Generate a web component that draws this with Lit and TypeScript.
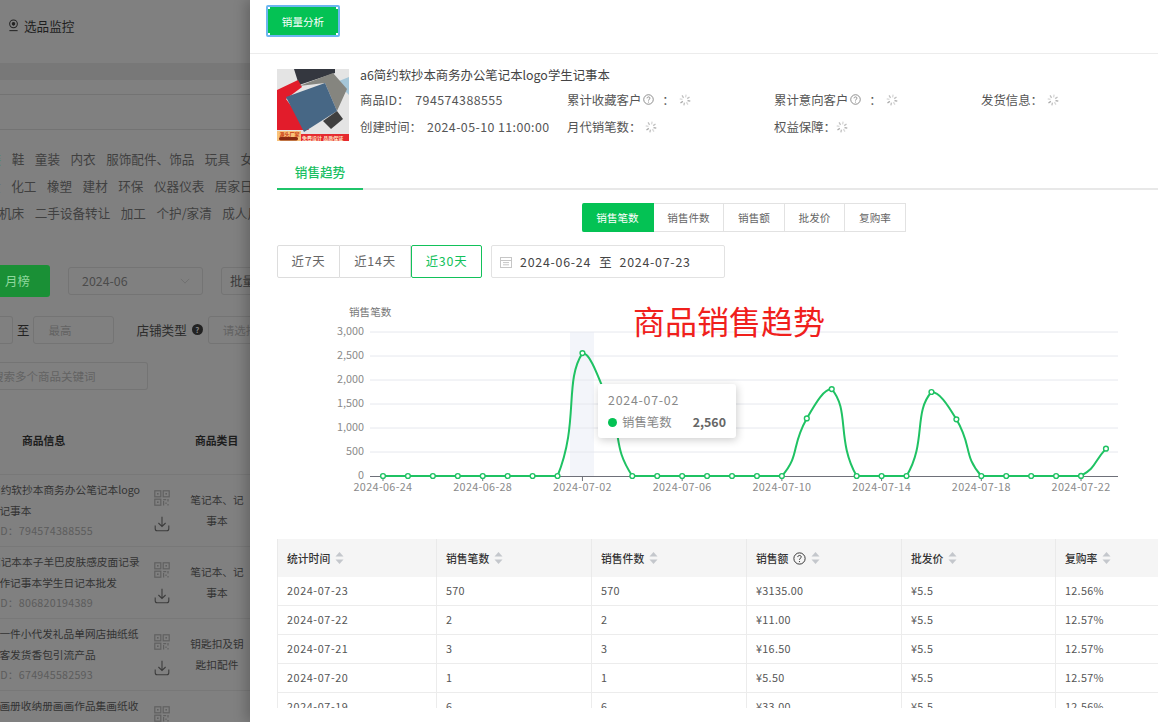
import { LitElement, html, css, svg } from "lit";
import { customElement } from "lit/decorators.js";

const OX = 277, OY = 290;
const VALUES = [0,0,0,0,0,0,0,0,2560,1600,0,0,0,0,0,0,0,1200,1810,0,0,0,1750,1180,0,0,0,0,2,570];
const px = (i: number) => 383 + i * 24.93 - OX;
const py = (v: number) => 476 - (v / 3000) * 144 - OY;
const PTS = VALUES.map((v, i) => [px(i), py(v)]);

function smoothPath(p: number[][]) {
  const s = 0.52;
  let d = `M${p[0][0]} ${p[0][1]}`;
  const ctrl = (i: number) => {
    const a = p[Math.max(i - 1, 0)], b = p[i], c = p[Math.min(i + 1, p.length - 1)];
    const l1 = Math.hypot(b[0] - a[0], b[1] - a[1]), l2 = Math.hypot(c[0] - b[0], c[1] - b[1]);
    const r = l1 + l2 === 0 ? 0.5 : l2 / (l1 + l2);
    const vx = c[0] - a[0], vy = c[1] - a[1];
    return {
      out: [b[0] + vx * s * r, b[1] + vy * s * r],
      in: [b[0] - vx * s * (1 - r), b[1] - vy * s * (1 - r)],
    };
  };
  const clamp = (v: number, x: number, y: number) => Math.min(Math.max(v, Math.min(x, y)), Math.max(x, y));
  for (let i = 0; i < p.length - 1; i++) {
    const c1 = ctrl(i).out, c2 = ctrl(i + 1).in;
    const a = p[i], b = p[i + 1];
    d += `C${c1[0].toFixed(2)} ${clamp(c1[1], a[1], b[1]).toFixed(2)} ${c2[0].toFixed(2)} ${clamp(c2[1], a[1], b[1]).toFixed(2)} ${b[0].toFixed(2)} ${b[1].toFixed(2)}`;
  }
  return d;
}

const spinnerIcon = (cls: string) => html`<svg class="spin ${cls}" viewBox="0 0 12 12" width="12" height="12">
  ${[0,45,90,135,180,225,270,315].map((a, i) => svg`<line x1="6" y1=".6" x2="6" y2="3.4" stroke="#a8a8a8" stroke-width="1.3" opacity="${0.45 + (i % 3) * 0.27}" transform="rotate(${a + 12} 6 6)"/>`)}
</svg>`;
const spinner = spinnerIcon("");
const help = (size: number, color: string) => html`<svg class="help" viewBox="0 0 12 12" width="${size}" height="${size}" fill="none" stroke="${color}">
  <circle cx="6" cy="6" r="5.2" stroke-width=".9"/>
  <path d="M4.4 4.7c0-2 3.2-2 3.2-.1 0 1.2-1.6 1.2-1.6 2.6" stroke-width=".9"/>
  <circle cx="6" cy="8.8" r=".55" fill="${color}" stroke="none"/>
</svg>`;
const sorter = html`<svg class="sort" viewBox="0 0 9 14" width="9" height="14"><path d="M4.5 1 8.5 5.5H.5Z" fill="#c4c7cc"/><path d="M4.5 13 8.5 8.5H.5Z" fill="#c4c7cc"/></svg>`;
const qr = html`<svg viewBox="0 0 16 16" width="16" height="16" fill="none" stroke="#606060" stroke-width="1.2">
  <rect x=".8" y=".8" width="6" height="6"/><rect x="9.2" y=".8" width="6" height="6"/><rect x=".8" y="9.2" width="6" height="6"/>
  <rect x="3" y="3" width="1.6" height="1.6" fill="#606060" stroke="none"/><rect x="11.4" y="3" width="1.6" height="1.6" fill="#606060" stroke="none"/><rect x="3" y="11.4" width="1.6" height="1.6" fill="#606060" stroke="none"/>
  <path d="M9.2 9.6h3M14 9v2.6M9.6 11v4.6M12 12.6v1.4M14 14v1.6" />
</svg>`;
const dl = html`<svg viewBox="0 0 16 16" width="16" height="16" fill="none" stroke="#3c3c3c" stroke-width="1.1">
  <path d="M8 .8v9.4M4.4 7 8 10.4 11.6 7"/><path d="M1.2 9.4v3.4c0 1.2.8 2 2 2h9.6c1.2 0 2-.8 2-2V9.4"/>
</svg>`;

const LEFT_ROWS = [
  { l: ["a6简约软抄本商务办公笔记本logo", "学生记事本"], id: "商品ID：794574388555", cat: ["笔记本、记", "事本"] },
  { l: ["a5笔记本本子羊巴皮肤感皮面记录", "可制作记事本学生日记本批发"], id: "商品ID：806820194389", cat: ["笔记本、记", "事本"] },
  { l: ["支持一件小代发礼品单网店抽纸纸", "纸巾客发货香包引流产品"], id: "商品ID：674945582593", cat: ["钥匙扣及钥", "匙扣配件"] },
  { l: ["相册画册收纳册画画作品集画纸收", "纳内页描纸收纳袋绘画等8K作品"], id: "商品ID：700000000000", cat: ["\u00a0", "资料册"] },
];

const ROWS = [
  ["2024-07-23", "570", "570", "¥3135.00", "¥5.5", "12.56%"],
  ["2024-07-22", "2", "2", "¥11.00", "¥5.5", "12.57%"],
  ["2024-07-21", "3", "3", "¥16.50", "¥5.5", "12.57%"],
  ["2024-07-20", "1", "1", "¥5.50", "¥5.5", "12.57%"],
  ["2024-07-19", "6", "6", "¥33.00", "¥5.5", "12.56%"],
];
const XLABELS: [number, string][] = [[0,"2024-06-24"],[4,"2024-06-28"],[8,"2024-07-02"],[12,"2024-07-06"],[16,"2024-07-10"],[20,"2024-07-14"],[24,"2024-07-18"],[28,"2024-07-22"]];

@customElement("app-root")
export class AppRoot extends LitElement {
  static styles = css`
    :host { display: block; width: 1158px; height: 722px; overflow: hidden; font-family: "Noto Sans CJK SC", "Noto Sans", sans-serif; }
    .page { display: flex; width: 1158px; height: 722px; overflow: hidden; }

    .left { flex: none; width: 250px; height: 722px; overflow: hidden; background: #808080; color: #333; }
    .monitor { height: 53px; box-sizing: border-box; padding: 0 0 3px 8px; display: flex; align-items: center; gap: 5px; font-size: 12.6px; color: #1e1e1e; }
    .band { margin-top: 10px; height: 17px; background: #787878; }
    .rule1 { height: 14px; border-bottom: 1px solid #737373; }
    .rule2 { height: 34px; border-bottom: 1px solid #737373; }
    .cats { padding-top: 15px; height: 120px; }
    .cat-row { display: flex; gap: 10.5px; height: 27px; align-items: center; white-space: nowrap; font-size: 12.6px; color: #404040; }
    .cat-row.a { margin-left: -24px; }
    .cat-row.b { margin-left: -24.5px; }
    .cat-row.c { margin-left: -1px; }
    .cat-row .g { color: #3f9468; }
    .filter { display: flex; align-items: center; white-space: nowrap; }
    .f1 { height: 32px; }
    .month { flex: none; width: 50px; height: 32px; box-sizing: border-box; padding-left: 5px; border-radius: 0 3px 3px 0; background: #1a9036; color: #8ed79c; font-size: 12.4px; line-height: 32px; }
    .box { flex: none; box-sizing: border-box; height: 28px; border: 1px solid #747474; border-radius: 3px; font-size: 11.5px; color: #636363; display: flex; align-items: center; }
    .select { width: 135px; margin-left: 18px; padding: 0 12px 0 13px; justify-content: space-between; color: #4b4b4b; font-size: 12.4px; }
    .cut { width: 60px; margin-left: 18px; padding-left: 8px; color: #3a3a3a; font-size: 12.4px; }
    .f2 { height: 29px; margin-top: 18px; }
    .low { width: 13px; border-left: 0; border-radius: 0 3px 3px 0; }
    .to { margin: 0 4px; font-size: 12.4px; color: #222; width: 13px; }
    .high { width: 81px; padding-left: 14px; }
    .shop { margin-left: 22px; font-size: 12.6px; color: #2c2c2c; width: 52px; }
    .dot-help { margin-left: 5px; flex: none; width: 11px; height: 11px; border-radius: 50%; background: #222; color: #808080; font-size: 8px; line-height: 11px; text-align: center; font-weight: 700; }
    .shop-input { width: 60px; margin-left: 5px; padding-left: 14px; }
    .f3 { height: 28px; margin-top: 18px; }
    .kw { width: 148px; border-left: 0; border-radius: 0 3px 3px 0; overflow: hidden; }
    .kw span { margin-left: -8px; font-size: 11.5px; }
    .lhead { margin-top: 20px; height: 65px; padding-bottom: 4px; display: flex; align-items: center; font-size: 10.8px; font-weight: 700; color: #1d1d1d; border-bottom: 1px solid #787878; box-sizing: border-box; }
    .lhead .n { margin-left: 22px; width: 173px; }
    .lrow { height: 72px; box-sizing: border-box; border-bottom: 1px solid #787878; display: flex; }
    .ltext { flex: none; margin-left: -22px; padding-top: 4px; box-sizing: border-box; width: 176px; font-size: 10.7px; line-height: 21px; color: #333; white-space: nowrap; overflow: hidden; }
    .ltext .id { color: #5c5c5c; letter-spacing: .25px; line-height: 20px; margin-left: -3px; }
    .lic { flex: none; width: 16px; padding-top: 15px; display: flex; flex-direction: column; gap: 10px; }
    .lic svg { display: block; }
    .lcat { flex: none; width: 80px; text-align: center; padding-top: 14px; font-size: 10.7px; line-height: 21px; color: #333; margin-left: 7px; white-space: nowrap; }

    .drawer { flex: none; width: 908px; height: 722px; overflow: hidden; background: #fff; position: relative; box-shadow: -4px 0 12px rgba(0,0,0,.22); color: #555; }
    .dhead { height: 54px; box-sizing: border-box; border-bottom: 1px solid #ececec; padding: 5px 0 0 16px; }
    .primary { position: relative; width: 74px; height: 32px; box-sizing: border-box; border: 2px solid #6cb6f0; border-radius: 2px; background: #04c254; color: #fff; font-family: inherit; font-size: 10.6px; padding: 0; display: block; }
    .mark { position: absolute; width: 2px; height: 2px; background: #fff; }
    .m1 { left: 0; top: 0; } .m2 { right: 0; top: 0; } .m3 { left: 0; bottom: 0; } .m4 { right: 0; bottom: 0; }
    .body { padding-left: 27px; }
    .product { display: flex; gap: 11px; margin-top: 15px; height: 72px; }
    .thumb { flex: none; display: block; }
    .pic { filter: blur(.5px); }
    .info { margin-top: -7px; width: 800px; font-size: 12.4px; color: #555; }
    .ptitle { height: 24px; line-height: 26px; color: #444; white-space: nowrap; }
    .igrid { display: grid; grid-template-columns: repeat(4, 207px); grid-auto-rows: 27px; align-items: center; white-space: nowrap; }
    .item { display: flex; align-items: center; }
    .val { margin-left: 6px; letter-spacing: .42px; color: #555; }
    .val.c { margin-left: 5px; }
    .help { margin: 0 3px 0 2px; flex: none; }
    .spin { margin-left: 4px; flex: none; }
    .spin.tight { margin-left: 0; }
    .colon { margin: 0 0 0 5px; }
    .tabs { margin-top: 13px; height: 36px; box-sizing: border-box; border-bottom: 2px solid #e8e8e8; width: 881px; }
    .tab { width: 86px; height: 36px; box-sizing: border-box; border-bottom: 2px solid #1fc46a; color: #19bf62; font-size: 12.6px; font-weight: 500; text-align: center; line-height: 35px; }
    .seg { display: flex; margin: 13px 0 0 305px; height: 29px; }
    .seg div { box-sizing: border-box; height: 29px; border: 1px solid #e2e2e2; border-left: 0; font-size: 10.6px; line-height: 27px; text-align: center; color: #666; }
    .seg .on { background: #04c254; border-color: #04c254; color: #fff; border-radius: 2px 0 0 2px; }
    .range { display: flex; margin-top: 13px; height: 33px; }
    .rb { box-sizing: border-box; height: 33px; border: 1px solid #ddd; border-left: 0; text-align: center; line-height: 31px; font-size: 12.4px; letter-spacing: .8px; color: #666; }
    .rb.first { border-left: 1px solid #ddd; border-radius: 2px 0 0 2px; }
    .rb.on { border: 1px solid #12c15a; color: #12c15a; border-radius: 2px; }
    .dates { box-sizing: border-box; margin-left: 9px; width: 234px; height: 33px; border: 1px solid #e2e2e2; border-radius: 2px; display: flex; align-items: center; padding-left: 8px; font-size: 12.4px; color: #444; white-space: nowrap; }
    .dates .d { letter-spacing: .75px; }
    .dates .z { margin: 0 8px; }
    .dates svg { margin-right: 8px; }
    .chart { position: relative; margin-top: 12px; height: 249px; width: 881px; }
    .chart svg { display: block; }
    .chart text { font-family: "Noto Sans CJK SC", "Noto Sans", sans-serif; }
    .big { position: absolute; left: 356px; top: 6px; font-size: 32px; line-height: 48px; color: #f0201c; white-space: nowrap; }
    .tip { position: absolute; left: 321px; top: 94px; width: 138px; height: 54px; box-sizing: border-box; padding: 6px 10px; background: #fff; border-radius: 3px; box-shadow: 1px 2px 8px rgba(0,0,0,.2); color: #888; font-size: 12.4px; }
    .tip .t { line-height: 20px; letter-spacing: .75px; }
    .tip .r { display: flex; align-items: center; line-height: 24px; }
    .tip .o { width: 9px; height: 9px; border-radius: 50%; background: #04c254; margin-right: 5px; flex: none; }
    .tip b { margin-left: auto; font-weight: 700; color: #666; }
    .wrap { width: 881px; height: 169px; overflow: hidden; }
    table { border-collapse: separate; border-spacing: 0; table-layout: fixed; width: 1036px; }
    th { height: 38px; padding: 0 0 2px 9px; background: #f5f5f5; font-size: 10.8px; font-weight: 500; color: #333; text-align: left; border-left: 1px solid #eaeaea; box-sizing: border-box; white-space: nowrap; }
    th span { display: inline-flex; align-items: center; gap: 5px; vertical-align: middle; }
    th .help { margin: 0; }
    td { height: 29px; padding: 0 0 2px 9px; box-sizing: border-box; font-size: 10.8px; letter-spacing: .3px; color: #555; border-left: 1px solid #ececec; border-bottom: 1px solid #ececec; white-space: nowrap; }
    td.date { letter-spacing: .6px; }
  `;

  render() {
    return html`<div class="page">
      <div class="left">
        <div class="monitor">
          <svg viewBox="0 0 12 14" width="11" height="13" fill="none" stroke="#222" stroke-width="1.1"><circle cx="6" cy="5.2" r="4.2"/><circle cx="6" cy="5.2" r="1.4" fill="#222"/><path d="M1.5 12.6h9"/></svg>
          <span>选品监控</span>
        </div>
        <div class="band"></div>
        <div class="rule1"></div>
        <div class="rule2"></div>
        <div class="cats">
          <div class="cat-row a"><span class="g">女装</span>${["鞋","童装","内衣","服饰配件、饰品","玩具","女装"].map(t => html`<span>${t}</span>`)}</div>
          <div class="cat-row b"><span>五金</span>${["化工","橡塑","建材","环保","仪器仪表","居家日用"].map(t => html`<span>${t}</span>`)}</div>
          <div class="cat-row c">${["机床","二手设备转让","加工","个护/家清","成人用品"].map(t => html`<span>${t}</span>`)}</div>
        </div>
        <div class="filter f1">
          <div class="month">月榜</div>
          <div class="box select"><span>2024-06</span><svg viewBox="0 0 12 7" width="10" height="6" fill="none" stroke="#6c6c6c" stroke-width="1"><path d="M1 1l5 5 5-5"/></svg></div>
          <div class="box cut">批量</div>
        </div>
        <div class="filter f2">
          <div class="box low"></div>
          <div class="to">至</div>
          <div class="box high">最高</div>
          <div class="shop">店铺类型</div>
          <div class="dot-help">?</div>
          <div class="box shop-input">请选择</div>
        </div>
        <div class="filter f3">
          <div class="box kw"><span>搜索多个商品关键词</span></div>
        </div>
        <div class="lhead"><div class="n">商品信息</div><div>商品类目</div></div>
        ${LEFT_ROWS.map(r => html`<div class="lrow">
          <div class="ltext">${r.l.map(t => html`<div>${t}</div>`)}<div class="id">${r.id}</div></div>
          <div class="lic">${qr}${dl}</div>
          <div class="lcat">${r.cat.map(t => html`<div>${t}</div>`)}</div>
        </div>`)}
      </div>

      <div class="drawer">
        <div class="dhead">
          <button class="primary">销量分析<i class="mark m1"></i><i class="mark m2"></i><i class="mark m3"></i><i class="mark m4"></i></button>
        </div>
        <div class="body">
          <div class="product">
            <svg class="thumb" viewBox="0 0 72 72" width="72" height="72">
              <g class="pic">
                <rect width="72" height="72" fill="#e4e4e4"/>
                <path d="M17 0H58V4L22 16Z" fill="#34373f"/>
                <path d="M62 12 72 8V26L68 22Z" fill="#a5c6d8"/>
                <path d="M0 21 21 11 25 18 9 30 32 61H0Z" fill="#e21c2b"/>
                <path d="M22 17 56 4 70 20 60 42 48 14Z" fill="#85857f"/>
                <path d="M9 28 48 14 60 42 27 63Z" fill="#476785"/>
                <path d="M46 52 60 42 66 50 54 60Z" fill="#3f3f3f"/>
              </g>
              <rect y="62" width="24" height="10" fill="#f9c27b"/>
              <rect x="24" y="65" width="48" height="7" fill="#e52a30"/>
              <rect x="2" y="68" width="19" height="3.4" rx="1.6" fill="#8a2a12"/>
              <text x="2.5" y="67" font-size="5" font-weight="700" fill="#c93a12">源头厂家</text>
              <text x="25" y="70.6" font-size="5" font-weight="700" fill="#ffe9c9">免费设计 品质保证</text>
            </svg>
            <div class="info">
              <div class="ptitle">a6简约软抄本商务办公笔记本logo学生记事本</div>
              <div class="igrid">
                <div class="item">商品ID：<span class="val">794574388555</span></div>
                <div class="item">累计收藏客户${help(11, "#777")}<span class="colon">：</span>${spinner}</div>
                <div class="item">累计意向客户${help(11, "#777")}<span class="colon">：</span>${spinner}</div>
                <div class="item">发货信息：${spinner}</div>
                <div class="item">创建时间：<span class="val c">2024-05-10 11:00:00</span></div>
                <div class="item">月代销笔数：${spinner}</div>
                <div class="item">权益保障：${spinnerIcon("tight")}</div>
              </div>
            </div>
          </div>
          <div class="tabs"><div class="tab">销售趋势</div></div>
          <div class="seg">
            ${([["销售笔数",72,true],["销售件数",70,false],["销售额",61,false],["批发价",60,false],["复购率",61,false]] as [string,number,boolean][]).map(([t,w,on]) => html`<div class=${on ? "on" : ""} style="width:${w}px">${t}</div>`)}
          </div>
          <div class="range">
            <div class="rb first" style="width:63px">近7天</div>
            <div class="rb" style="width:71px">近14天</div>
            <div class="rb on" style="width:71px">近30天</div>
            <div class="dates">
              <svg viewBox="0 0 12 12" width="12" height="12" fill="none" stroke="#c6c6c6" stroke-width="1"><rect x=".5" y="1.5" width="11" height="10"/><path d="M.5 4.5h11M3 6.6h6M3 8.8h6"/></svg>
              <span class="d">2024-06-24</span><span class="z">至</span><span class="d">2024-07-23</span>
            </div>
          </div>
          <div class="chart">
            <svg width="881" height="249" viewBox="0 0 881 249">
              <rect x="${570 - OX}" y="${332 - OY}" width="24" height="144" fill="#f3f5fa"/>
              ${[500,1000,1500,2000,2500,3000].map(v => svg`<line x1="${370 - OX}" x2="${1118 - OX}" y1="${py(v)}" y2="${py(v)}" stroke="#e6e8ee"/>`)}
              ${[0,500,1000,1500,2000,2500,3000].map(v => svg`<text x="${364 - OX}" y="${py(v) + 3}" text-anchor="end" font-size="10.8" fill="#8a8a8a">${v.toLocaleString("en-US")}</text>`)}
              <text x="${349 - OX}" y="${316 - OY}" font-size="10.6" fill="#777">销售笔数</text>
              <line x1="${370 - OX}" x2="${1118 - OX}" y1="${py(0) + .5}" y2="${py(0) + .5}" stroke="#6e7079"/>
              ${XLABELS.map(([i, t]) => svg`<line x1="${px(i)}" x2="${px(i)}" y1="${py(0)}" y2="${py(0) + 5}" stroke="#6e7079"/><text x="${px(i)}" y="${py(0) + 15}" text-anchor="middle" font-size="10.8" letter-spacing=".35" fill="#8a8a8a">${t}</text>`)}
              <path d="${smoothPath(PTS)}" fill="none" stroke="#1fc263" stroke-width="2"/>
              ${PTS.map(([x, y]) => svg`<circle cx="${x}" cy="${y}" r="2.4" fill="#fff" stroke="#1fc263" stroke-width="1.4"/>`)}
            </svg>
            <div class="big">商品销售趋势</div>
            <div class="tip">
              <div class="t">2024-07-02</div>
              <div class="r"><i class="o"></i><span>销售笔数</span><b>2,560</b></div>
            </div>
          </div>
          <div class="wrap">
            <table>
              <colgroup><col style="width:159px"/><col style="width:155px"/><col style="width:155px"/><col style="width:155px"/><col style="width:154px"/><col style="width:258px"/></colgroup>
              <thead><tr>
                <th><span>统计时间${sorter}</span></th>
                <th><span>销售笔数${sorter}</span></th>
                <th><span>销售件数${sorter}</span></th>
                <th><span>销售额${help(13, "#333")}${sorter}</span></th>
                <th><span>批发价${sorter}</span></th>
                <th><span>复购率${sorter}</span></th>
              </tr></thead>
              <tbody>
                ${ROWS.map(r => html`<tr>${r.map((c, i) => html`<td class=${i === 0 ? "date" : ""}>${c}</td>`)}</tr>`)}
              </tbody>
            </table>
          </div>
        </div>
      </div>
    </div>`;
  }
}
